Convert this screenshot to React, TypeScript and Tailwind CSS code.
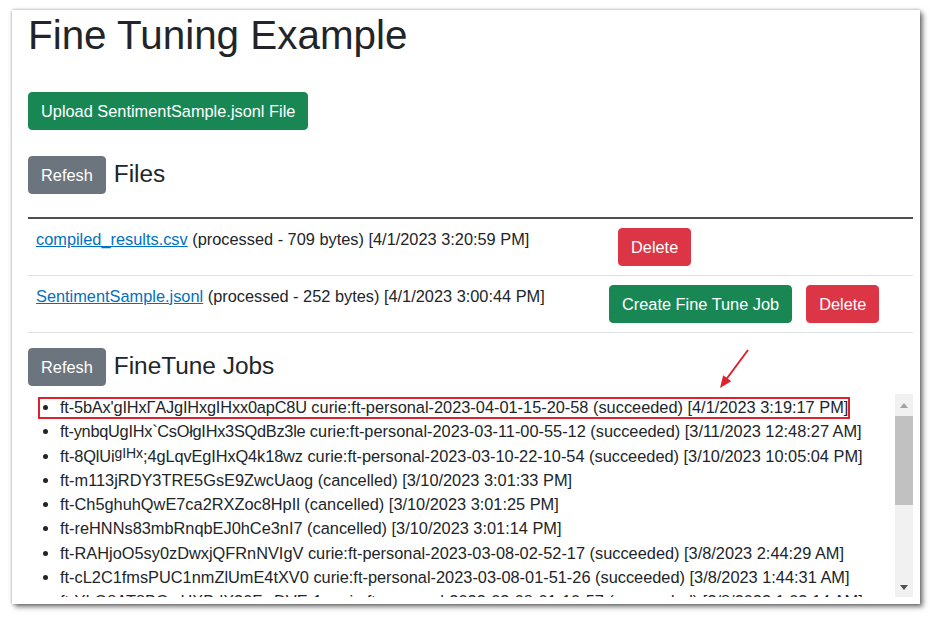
import React from 'react';

const jobs: React.ReactNode[] = [
  <>
    <span className="tracking-[-0.17px]">ft-5bAx'gIHxΓAJgIHxgIHxx0apC8U</span> curie:ft-personal-2023-04-01-15-20-58 (succeeded) [4/1/2023 3:19:17 PM]
  </>,
  <>
    <span className="tracking-[-0.27px]">ft-ynbqUgIHx`CsOłgIHx3SQdBz3le</span> curie:ft-personal-2023-03-11-00-55-12 (succeeded) [3/11/2023 12:48:27 AM]
  </>,
  <>
    <span className="tracking-[-0.1px]">
      ft-8QlUi<span className="relative -top-[4px] text-[14px] leading-none">gIHx</span>;4gLqvEgIHxQ4k18wz
    </span>{' '}
    curie:ft-personal-2023-03-10-22-10-54 (succeeded) [3/10/2023 10:05:04 PM]
  </>,
  <>ft-m113jRDY3TRE5GsE9ZwcUaog (cancelled) [3/10/2023 3:01:33 PM]</>,
  <>ft-Ch5ghuhQwE7ca2RXZoc8HpIl (cancelled) [3/10/2023 3:01:25 PM]</>,
  <>ft-reHNNs83mbRnqbEJ0hCe3nI7 (cancelled) [3/10/2023 3:01:14 PM]</>,
  <>ft-RAHjoO5sy0zDwxjQFRnNVIgV curie:ft-personal-2023-03-08-02-52-17 (succeeded) [3/8/2023 2:44:29 AM]</>,
  <>ft-cL2C1fmsPUC1nmZlUmE4tXV0 curie:ft-personal-2023-03-08-01-51-26 (succeeded) [3/8/2023 1:44:31 AM]</>,
  <>ft-YLQ8AT8BQwHXBdX30FwDVEr1 curie:ft-personal-2023-03-08-01-10-57 (succeeded) [3/8/2023 1:03:14 AM]</>,
];

const btn = 'h-[38px] px-3 rounded-[4px] border text-[16.35px] leading-6 text-white whitespace-nowrap';
const green = 'bg-[#198754] border-[#198754]';
const red = 'bg-[#dc3545] border-[#dc3545]';
const gray = 'bg-[#6c757d] border-[#6c757d]';

function Scrollbar() {
  return (
    <div className="w-[18px] bg-[#f1f1f1] flex flex-col">
      <div className="h-[22px] flex items-center justify-center">
        <svg width="8" height="5" viewBox="0 0 8 5">
          <path d="M0 5 L4 0 L8 5 Z" fill="#a3a3a3" />
        </svg>
      </div>
      <div className="h-[89px] bg-[#c1c1c1]" />
      <div className="flex-1" />
      <div className="h-[20px] flex items-center justify-center">
        <svg width="8" height="5" viewBox="0 0 8 5">
          <path d="M0 0 L8 0 L4 5 Z" fill="#505050" />
        </svg>
      </div>
    </div>
  );
}

export default function App() {
  return (
    <div className="min-h-[620px] bg-white pt-[10px] pl-[12px] text-[#212529] text-[16.35px] leading-6 font-['Liberation_Sans',Arial,sans-serif]">
      <div className="relative w-[908px] h-[594px] overflow-hidden bg-white pl-4 pr-[7px] shadow-[0_0_3px_rgba(0,0,0,0.35),3px_3px_5px_rgba(0,0,0,0.5)]">
        <h1 className="mt-px text-[40.4px] leading-[48px] font-normal">Fine Tuning Example</h1>

        <button className={`block mt-[33px] ${btn} ${green}`}>Upload SentimentSample.jsonl File</button>

        <div className="mt-[26px] flex items-center gap-2">
          <button className={`${btn} ${gray}`}>Refesh</button>
          <h4 className="text-[24.4px] leading-[29px] font-normal -mt-[3px]">Files</h4>
        </div>

        {/* files table */}
        <div className="mt-[23px] border-t-2 border-[#4f4f4f]">
          <div className="flex border-b border-[#dee2e6]">
            <div className="w-[573px] px-2 pt-2">
              <a href="#" className="text-[#0071c1] underline">compiled_results.csv</a> (processed - 709 bytes) [4/1/2023 3:20:59 PM]
            </div>
            <div className="flex-1 flex px-2 py-[9px]">
              <button className={`ml-[9px] ${btn} ${red}`}>Delete</button>
            </div>
          </div>
          <div className="flex border-b border-[#dee2e6]">
            <div className="w-[573px] px-2 pt-2">
              <a href="#" className="text-[#0071c1] underline">SentimentSample.jsonl</a> (processed - 252 bytes) [4/1/2023 3:00:44 PM]
            </div>
            <div className="flex-1 flex gap-[14px] px-2 py-[9px]">
              <button className={`${btn} ${green}`}>Create Fine Tune Job</button>
              <button className={`${btn} ${red}`}>Delete</button>
            </div>
          </div>
        </div>

        <div className="mt-[15px] flex items-center gap-2">
          <button className={`${btn} ${gray}`}>Refesh</button>
          <h4 className="text-[24.4px] leading-[29px] font-normal -mt-[3px]">FineTune Jobs</h4>
        </div>

        {/* jobs list */}
        <div className="mt-2 h-[203px] flex">
          <div className="flex-1 overflow-hidden">
            <ul className="list-disc pl-8 pt-px">
              {jobs.map((j, i) => (
                <li key={i} className="h-[24.3px] leading-[24.3px] whitespace-nowrap">
                  {j}
                </li>
              ))}
            </ul>
          </div>
          <Scrollbar />
        </div>

        {/* annotation */}
        <div className="absolute left-[26px] top-[387px] w-[812px] h-[22px] border-2 border-[#e0202c] pointer-events-none" />
        <svg className="absolute inset-0 pointer-events-none" width="908" height="594">
          <line x1="736" y1="340" x2="713" y2="371" stroke="#e0202c" strokeWidth="2" />
          <path d="M708 378 L719.2 371.3 L711.2 365.3 Z" fill="#e0202c" />
        </svg>
      </div>
    </div>
  );
}
